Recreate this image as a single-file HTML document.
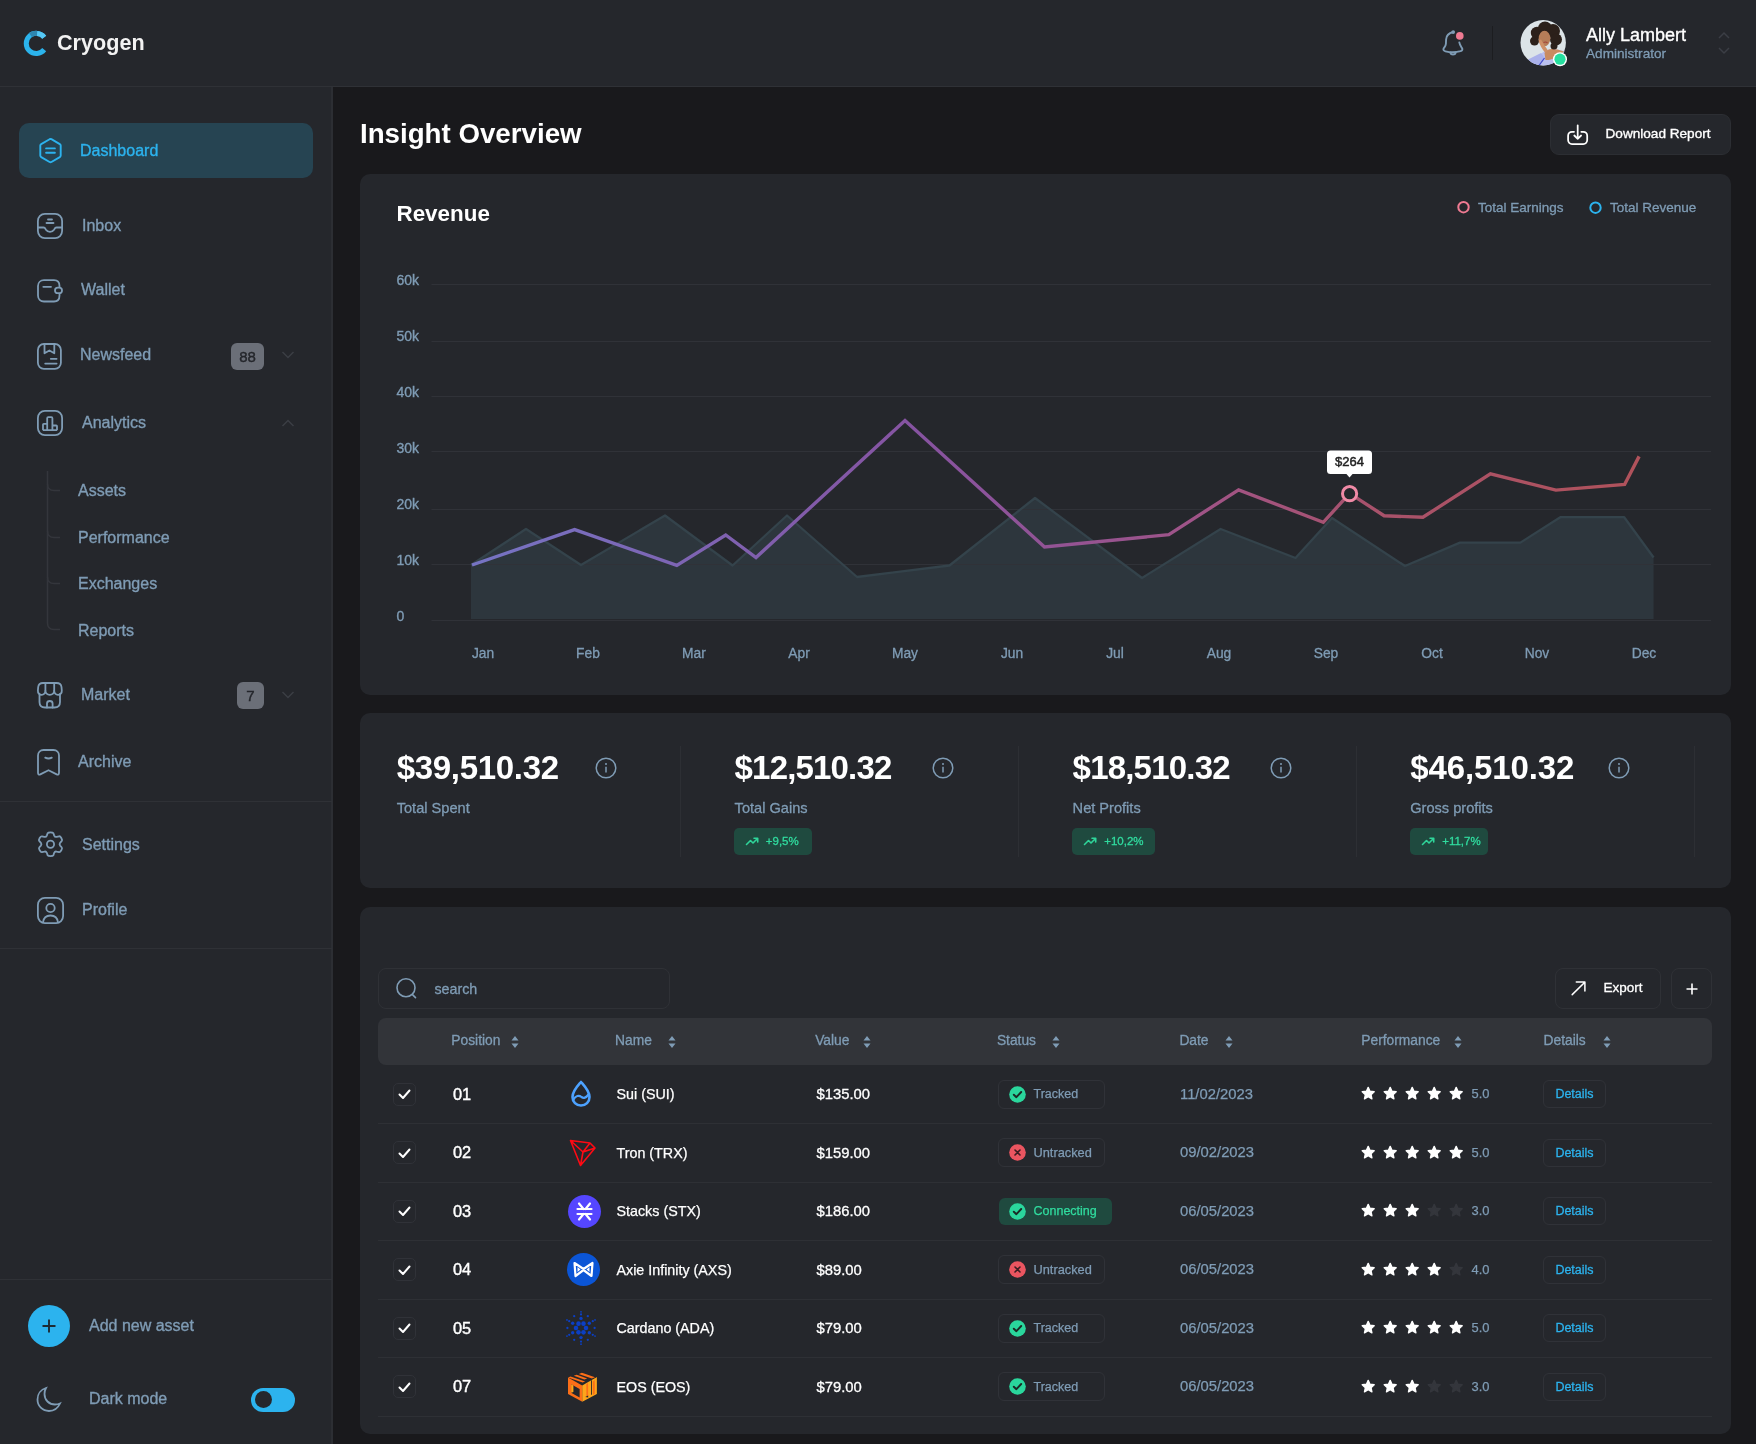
<!DOCTYPE html>
<html><head><meta charset="utf-8">
<style>
*{margin:0;padding:0;box-sizing:border-box}
html,body{width:1756px;height:1444px;overflow:hidden;background:#19191c;font-family:"Liberation Sans",sans-serif;color:#fff}
.abs{position:absolute}
.t{position:absolute;white-space:nowrap;line-height:1}
#hdr{position:absolute;left:0;top:0;width:1756px;height:87px;background:#25272c;border-bottom:1px solid #2f3136}
#side{position:absolute;left:0;top:87px;width:333px;height:1357px;background:#25272c;border-right:2px solid #2c2e33}
.muted{color:#7f9cb5}
.card{position:absolute;background:#25272c;border-radius:10px}
svg{position:absolute;overflow:visible}
#root{position:absolute;left:0;top:0;width:1756px;height:1444px;will-change:transform;overflow:hidden}
</style></head><body><div id="root">
<!-- HEADER -->
<div id="hdr"></div>
<svg style="left:1px;top:0" width="60" height="86">
  <path d="M43.22 37.21 A10.05 10.05 0 1 0 43.22 49.59" fill="none" stroke="#2bb3ec" stroke-width="5"/>
  <path d="M29.54 35.17 A10.05 10.05 0 0 1 36.18 33.39" fill="none" stroke="#2e86b0" stroke-width="5"/>
  <path d="M36.18 33.39 A10.05 10.05 0 0 1 43.22 37.21" fill="none" stroke="#55c7f4" stroke-width="5"/>
</svg>
<div class="t" style="left:57px;top:31.5px;font-size:21.6px;font-weight:700;color:#f2f2f2">Cryogen</div>

<!-- bell -->
<svg style="left:1430px;top:20px" width="45" height="45" fill="none" stroke="#7f9cb5" stroke-width="1.9" stroke-linecap="round">
  <path d="M23.1 12 C19 13 16.3 15.5 16.1 19.5 L15.9 23.8 C15.8 26 14.5 27 13.6 28.5 C13 29.8 13.8 30.8 15.5 31.3 C18 32 20.5 32.3 22.9 32.3 C25.5 32.3 28 32 30.5 31.2 C32.2 30.6 32.8 29.6 32.1 28.3 C31 26.5 29.7 24.8 29.3 22.4"/>
  <path d="M20.2 32.6 C20.7 34 21.6 34.5 23 34.5 C24.4 34.5 25.3 34 25.8 32.6"/>
  <circle cx="23.2" cy="12.1" r="0.9" fill="#7f9cb5"/>
  <circle cx="29.8" cy="15.9" r="3.8" fill="#ef7a92" stroke="none"/>
</svg>
<div class="abs" style="left:1492px;top:26px;width:1px;height:34px;background:#1c1d20"></div>
<!-- avatar -->
<svg style="left:1520px;top:20px" width="50" height="50">
  <defs><clipPath id="av"><circle cx="23.2" cy="22.7" r="22.7"/></clipPath></defs>
  <g clip-path="url(#av)">
    <rect width="50" height="50" fill="#dce4e8"/>
    <path d="M22 33 C26 29 33 28 44 31 L50 32 L50 50 L0 50 Z" fill="#b9bfee"/>
    <path d="M24.5 33 C27 28.5 33 27.5 44 31.5 C37 37.5 31 40.5 25.5 40 Z" fill="#c98b60"/>
    <path d="M5 41 L21 33 L25 38.5 L17.5 47.5 L7 49 Z" fill="#aab1ea"/>
    <path d="M17.5 47.5 L24.5 38" stroke="#3f47c9" stroke-width="1.2"/>
    <circle cx="17" cy="13" r="6.2" fill="#2b201a"/>
    <circle cx="25" cy="8.5" r="7" fill="#2b201a"/>
    <circle cx="33" cy="11" r="7" fill="#2b201a"/>
    <circle cx="36" cy="19.5" r="6" fill="#2b201a"/>
    <circle cx="14.5" cy="21" r="4.5" fill="#2b201a"/>
    <circle cx="34" cy="26" r="3.5" fill="#2b201a"/>
    <ellipse cx="24.5" cy="18.5" rx="5.8" ry="7.8" fill="#b57d58"/>
    <path d="M18.5 20.5 C19.5 24 22 29.5 25 32.5 L28 30.5 C25 26.5 23 22.5 21 19.5 Z" fill="#cf9168"/>
    <path d="M23.5 22.5 C24.5 22 26.5 22 27.5 23" stroke="#a5443a" stroke-width="1.1" fill="none"/>
  </g>
  <circle cx="40" cy="39.2" r="7" fill="#fff"/>
  <circle cx="40" cy="39.2" r="5.6" fill="#26df9f"/>
</svg>
<div class="t" style="left:1586px;top:25.5px;font-size:18px;color:#fff;-webkit-text-stroke:0.35px #fff">Ally Lambert</div>
<div class="t" style="left:1586px;top:47px;font-size:13.6px;color:#7f9cb5;-webkit-text-stroke:0.3px #7f9cb5">Administrator</div>
<svg style="left:1716px;top:30px" width="16" height="26">
  <path d="M3 8 L8 3 L13 8" fill="none" stroke="#3b3e45" stroke-width="1.5"/>
  <path d="M3 18 L8 23 L13 18" fill="none" stroke="#3b3e45" stroke-width="1.5"/>
</svg>

<!-- SIDEBAR -->
<div id="side"></div>

<!-- active -->
<div class="abs" style="left:19px;top:123px;width:294px;height:55px;border-radius:10px;background:#264452"></div>
<svg style="left:35.5px;top:136.5px" width="28" height="28" viewBox="-0.6 -0.6 28 28">
  <path d="M13 1.6 Q13.9 1.1 14.8 1.6 L23.2 6.5 Q24.1 7 24.1 8 L24.1 18 Q24.1 19 23.2 19.5 L14.8 24.4 Q13.9 24.9 13 24.4 L4.6 19.5 Q3.7 19 3.7 18 L3.7 8 Q3.7 7 4.6 6.5 Z" fill="none" stroke="#2cb3ee" stroke-width="1.9"/>
  <path d="M9.5 10.8 H18.3 M9.5 15.2 H18.3" stroke="#2cb3ee" stroke-width="1.9" stroke-linecap="round"/>
</svg>
<div class="t" style="left:80px;top:142.5px;font-size:16px;color:#2cb3ee;-webkit-text-stroke:0.35px #2cb3ee">Dashboard</div>

<!-- inbox -->
<svg style="left:37px;top:213px" width="26" height="26" fill="none" stroke="#7f9cb5" stroke-width="1.8" stroke-linecap="round">
  <rect x="0.9" y="0.9" width="24.2" height="24.2" rx="7"/>
  <path d="M0.9 14.5 H6.5 C8 14.5 8.3 15.5 9 16.8 C9.7 18 11 18.8 13 18.8 C15 18.8 16.3 18 17 16.8 C17.7 15.5 18 14.5 19.5 14.5 H25.1"/>
  <path d="M11 6.5 H15 M9.5 10 H16.5"/>
</svg>
<div class="t muted" style="left:82px;top:217.5px;font-size:16px;-webkit-text-stroke:0.35px #7f9cb5">Inbox</div>

<!-- wallet -->
<svg style="left:37px;top:279px" width="26" height="24" fill="none" stroke="#7f9cb5" stroke-width="1.8" stroke-linecap="round">
  <path d="M22.5 8 V7 C22.5 3.5 20.5 1.2 17 1.2 H7 C3.5 1.2 1 3.5 1 7 V16.5 C1 20 3.5 22.5 7 22.5 H17 C20.5 22.5 22.5 20 22.5 16.5 V15"/>
  <path d="M6.3 7.8 H14"/>
  <rect x="18" y="8.6" width="7" height="5.6" rx="2.8"/>
</svg>
<div class="t muted" style="left:81px;top:281.9px;font-size:16px;-webkit-text-stroke:0.35px #7f9cb5">Wallet</div>

<!-- newsfeed -->
<svg style="left:37px;top:343px" width="26" height="27" fill="none" stroke="#7f9cb5" stroke-width="1.8" stroke-linecap="round" stroke-linejoin="round">
  <rect x="0.9" y="1" width="23" height="24.8" rx="6"/>
  <path d="M7.5 1 V10.3 L12.4 7.4 L17.3 10.3 V1"/>
  <path d="M13.8 15.8 H19.6 M8.2 20.6 H19.6"/>
</svg>
<div class="t muted" style="left:80px;top:347.2px;font-size:16px;-webkit-text-stroke:0.35px #7f9cb5">Newsfeed</div>
<div class="abs" style="left:231px;top:343px;width:33px;height:27px;border-radius:6px;background:#6b6f78"></div>
<div class="t" style="left:231px;top:349px;width:33px;text-align:center;font-size:15px;color:#24262b;-webkit-text-stroke:0.4px #24262b">88</div>
<svg style="left:281px;top:350px" width="14" height="10"><path d="M1.5 2 L7 7.5 L12.5 2" fill="none" stroke="#3b3e45" stroke-width="1.5"/></svg>

<!-- analytics -->
<svg style="left:37px;top:410px" width="26" height="26" fill="none" stroke="#7f9cb5" stroke-width="1.8" stroke-linejoin="round">
  <rect x="0.9" y="0.9" width="24.2" height="24.2" rx="7"/>
  <path d="M6 20.2 H20 M6 20.2 V14.5 Q6 13.8 6.8 13.8 H10.2 V20.2 M10.2 20.2 V8.2 Q10.2 7.2 11.2 7.2 H14.4 Q15.4 7.2 15.4 8.2 V20.2 M15.4 15.5 H19.2 Q20 15.5 20 16.3 V20.2"/>
</svg>
<div class="t muted" style="left:82px;top:414.5px;font-size:16px;-webkit-text-stroke:0.35px #7f9cb5">Analytics</div>
<svg style="left:281px;top:418px" width="14" height="10"><path d="M1.5 8 L7 2.5 L12.5 8" fill="none" stroke="#3b3e45" stroke-width="1.5"/></svg>

<!-- tree -->
<svg style="left:40px;top:468px" width="30" height="170" fill="none" stroke="#34363c" stroke-width="1.5">
  <path d="M7.5 3 V155 Q7.5 161.5 14 161.5 H20"/>
  <path d="M7.5 16 Q7.5 22.5 14 22.5 H20"/>
  <path d="M7.5 63 Q7.5 69.5 14 69.5 H20"/>
  <path d="M7.5 109 Q7.5 115.5 14 115.5 H20"/>
</svg>
<div class="t muted" style="left:78px;top:483px;font-size:16px;-webkit-text-stroke:0.35px #7f9cb5">Assets</div>
<div class="t muted" style="left:78px;top:529.5px;font-size:16px;-webkit-text-stroke:0.35px #7f9cb5">Performance</div>
<div class="t muted" style="left:78px;top:576px;font-size:16px;-webkit-text-stroke:0.35px #7f9cb5">Exchanges</div>
<div class="t muted" style="left:78px;top:622.5px;font-size:16px;-webkit-text-stroke:0.35px #7f9cb5">Reports</div>

<!-- market -->
<svg style="left:37px;top:682px" width="26" height="27" fill="none" stroke="#7f9cb5" stroke-width="1.8" stroke-linejoin="round" stroke-linecap="round">
  <path d="M2.5 12 V20 C2.5 23.5 4.5 25.5 8 25.5 H17.5 C21 25.5 23 23.5 23 20 V12"/>
  <path d="M6 1 H19.5 C22 1 24.2 2.5 24.5 5 L24.8 8.5 C25 11 23.2 12.8 21 12.8 C18.8 12.8 17.2 11 17.2 8.8 C17.2 11 15.4 12.8 12.8 12.8 C10.2 12.8 8.4 11 8.4 8.8 C8.4 11 6.8 12.8 4.6 12.8 C2.4 12.8 0.7 11 0.9 8.5 L1.2 5 C1.5 2.5 3.5 1 6 1 Z"/>
  <path d="M8.4 8.8 V1.2 M17.2 8.8 V1.2"/>
  <path d="M10 25.5 V21.5 C10 20 11 19 12.8 19 C14.6 19 15.6 20 15.6 21.5 V25.5"/>
</svg>
<div class="t muted" style="left:81px;top:686.5px;font-size:16px;-webkit-text-stroke:0.35px #7f9cb5">Market</div>
<div class="abs" style="left:237px;top:682px;width:27px;height:27px;border-radius:6px;background:#6b6f78"></div>
<div class="t" style="left:237px;top:688px;width:27px;text-align:center;font-size:15px;color:#24262b;-webkit-text-stroke:0.4px #24262b">7</div>
<svg style="left:281px;top:690px" width="14" height="10"><path d="M1.5 2 L7 7.5 L12.5 2" fill="none" stroke="#3b3e45" stroke-width="1.5"/></svg>

<!-- archive -->
<svg style="left:37px;top:749px" width="24" height="28" fill="none" stroke="#7f9cb5" stroke-width="1.8" stroke-linejoin="round" stroke-linecap="round">
  <path d="M1 6.5 C1 3.3 3.3 1 6.5 1 H16.5 C19.7 1 22 3.3 22 6.5 V23.8 C22 25.3 21 26 19.7 25.4 L11.5 21.2 L3.3 25.4 C2 26 1 25.3 1 23.8 Z"/>
  <path d="M8.2 8.6 C10.4 9.8 12.6 9.8 14.8 8.6"/>
</svg>
<div class="t muted" style="left:78px;top:753.5px;font-size:16px;-webkit-text-stroke:0.35px #7f9cb5">Archive</div>

<div class="abs" style="left:0;top:801px;width:332px;height:1px;background:#2f3136"></div>
<!-- settings -->
<svg style="left:36px;top:831px" width="29" height="29" fill="none" stroke="#7f9cb5" stroke-width="1.8" stroke-linejoin="round">
  <path d="M11.6 2.2 C12.3 1 16.7 1 17.4 2.2 L18.2 4.6 C18.6 5.5 19.6 6.1 20.6 5.8 L23.1 5.3 C24.5 5 26.7 8.8 25.8 9.9 L24.1 11.8 C23.5 12.6 23.5 13.8 24.1 14.6 L25.8 16.5 C26.7 17.6 24.5 21.4 23.1 21.1 L20.6 20.6 C19.6 20.3 18.6 20.9 18.2 21.8 L17.4 24.2 C16.7 25.4 12.3 25.4 11.6 24.2 L10.8 21.8 C10.4 20.9 9.4 20.3 8.4 20.6 L5.9 21.1 C4.5 21.4 2.3 17.6 3.2 16.5 L4.9 14.6 C5.5 13.8 5.5 12.6 4.9 11.8 L3.2 9.9 C2.3 8.8 4.5 5 5.9 5.3 L8.4 5.8 C9.4 6.1 10.4 5.5 10.8 4.6 Z"/>
  <circle cx="14.5" cy="13.2" r="3.6"/>
</svg>
<div class="t muted" style="left:82px;top:836.5px;font-size:16px;-webkit-text-stroke:0.35px #7f9cb5">Settings</div>
<!-- profile -->
<svg style="left:37px;top:897px" width="27" height="27" fill="none" stroke="#7f9cb5" stroke-width="1.8">
  <rect x="0.9" y="0.9" width="25.2" height="25.2" rx="7"/>
  <circle cx="13.5" cy="11" r="4.2"/>
  <path d="M6 25.5 C6.5 21 9.5 18.5 13.5 18.5 C17.5 18.5 20.5 21 21 25.5"/>
</svg>
<div class="t muted" style="left:82px;top:901.5px;font-size:16px;-webkit-text-stroke:0.35px #7f9cb5">Profile</div>
<div class="abs" style="left:0;top:948px;width:332px;height:1px;background:#2f3136"></div>

<div class="abs" style="left:0;top:1279px;width:332px;height:1px;background:#2f3136"></div>
<svg style="left:28px;top:1305px" width="42" height="42">
  <circle cx="21" cy="21" r="21" fill="#2cb3ee"/>
  <path d="M21 14.5 V27.5 M14.5 21 H27.5" stroke="#1d2b34" stroke-width="1.9"/>
</svg>
<div class="t muted" style="left:89px;top:1317.5px;font-size:16px;-webkit-text-stroke:0.35px #7f9cb5">Add new asset</div>
<svg style="left:36px;top:1386px" width="27" height="27" fill="none" stroke="#7f9cb5" stroke-width="1.8" stroke-linecap="round">
  <path d="M10 2 C5 3.5 1.5 8 1.5 13.5 C1.5 20 6.5 25 13 25 C18 25 22 22 24 17.5 C22.5 18.2 21 18.5 19 18.5 C13 18.5 8.5 14 8.5 8 C8.5 5.8 9 3.8 10 2 Z"/>
</svg>
<div class="t muted" style="left:89px;top:1390.5px;font-size:16px;-webkit-text-stroke:0.35px #7f9cb5">Dark mode</div>
<div class="abs" style="left:251px;top:1387.5px;width:44px;height:24px;border-radius:12px;background:#2cb3ee"></div>
<div class="abs" style="left:255px;top:1391px;width:17px;height:17px;border-radius:50%;background:#25272c"></div>


<!-- MAIN -->

<div class="t" style="left:360px;top:120px;font-size:27.7px;font-weight:700;color:#fff">Insight Overview</div>
<div class="abs" style="left:1550px;top:114px;width:181px;height:41px;border-radius:9px;background:#25272c;border:1px solid #2c2e33"></div>
<svg style="left:1560px;top:118px" width="36" height="32" fill="none" stroke="#fff" stroke-width="1.75" stroke-linecap="round" stroke-linejoin="round">
  <path d="M14 13.8 H12 C9.8 13.8 8.1 15.5 8.1 17.7 V22.1 C8.1 24.3 9.8 26.1 12 26.1 H23.3 C25.5 26.1 27.2 24.3 27.2 22.1 V17.7 C27.2 15.5 25.5 13.8 23.3 13.8 H21.3"/>
  <path d="M17.7 7.3 V20.8 M14.3 17.5 L17.7 20.8 L21.1 17.5"/>
</svg>
<div class="t" style="left:1605.5px;top:127px;font-size:13.6px;color:#fff;-webkit-text-stroke:0.35px #fff">Download Report</div>

<div class="card" style="left:360px;top:174px;width:1371px;height:521px"></div>
<div class="t" style="left:396.5px;top:203px;font-size:22.4px;font-weight:700;color:#fff">Revenue</div>
<svg style="left:1455px;top:199px" width="16" height="16"><circle cx="8.5" cy="8.2" r="5.2" fill="none" stroke="#ef7a92" stroke-width="2"/></svg>
<div class="t muted" style="left:1478px;top:200.5px;font-size:13.5px;-webkit-text-stroke:0.3px #7f9cb5">Total Earnings</div>
<svg style="left:1587px;top:199px" width="16" height="16"><circle cx="8.5" cy="8.7" r="5.2" fill="none" stroke="#2cb3ee" stroke-width="2"/></svg>
<div class="t muted" style="left:1610px;top:200.5px;font-size:13.5px;-webkit-text-stroke:0.3px #7f9cb5">Total Revenue</div>
<div class="t muted" style="left:396.5px;top:273.2px;font-size:14px;-webkit-text-stroke:0.35px #7f9cb5">60k</div>
<div class="t muted" style="left:396.5px;top:329.2px;font-size:14px;-webkit-text-stroke:0.35px #7f9cb5">50k</div>
<div class="t muted" style="left:396.5px;top:385.2px;font-size:14px;-webkit-text-stroke:0.35px #7f9cb5">40k</div>
<div class="t muted" style="left:396.5px;top:441.2px;font-size:14px;-webkit-text-stroke:0.35px #7f9cb5">30k</div>
<div class="t muted" style="left:396.5px;top:497.2px;font-size:14px;-webkit-text-stroke:0.35px #7f9cb5">20k</div>
<div class="t muted" style="left:396.5px;top:553.2px;font-size:14px;-webkit-text-stroke:0.35px #7f9cb5">10k</div>
<div class="t muted" style="left:396.5px;top:609.2px;font-size:14px;-webkit-text-stroke:0.35px #7f9cb5">0</div>

<div class="t muted" style="left:453px;width:60px;text-align:center;top:646.5px;font-size:13.8px;-webkit-text-stroke:0.3px #7f9cb5">Jan</div>
<div class="t muted" style="left:558px;width:60px;text-align:center;top:646.5px;font-size:13.8px;-webkit-text-stroke:0.3px #7f9cb5">Feb</div>
<div class="t muted" style="left:664px;width:60px;text-align:center;top:646.5px;font-size:13.8px;-webkit-text-stroke:0.3px #7f9cb5">Mar</div>
<div class="t muted" style="left:769px;width:60px;text-align:center;top:646.5px;font-size:13.8px;-webkit-text-stroke:0.3px #7f9cb5">Apr</div>
<div class="t muted" style="left:875px;width:60px;text-align:center;top:646.5px;font-size:13.8px;-webkit-text-stroke:0.3px #7f9cb5">May</div>
<div class="t muted" style="left:982px;width:60px;text-align:center;top:646.5px;font-size:13.8px;-webkit-text-stroke:0.3px #7f9cb5">Jun</div>
<div class="t muted" style="left:1085px;width:60px;text-align:center;top:646.5px;font-size:13.8px;-webkit-text-stroke:0.3px #7f9cb5">Jul</div>
<div class="t muted" style="left:1189px;width:60px;text-align:center;top:646.5px;font-size:13.8px;-webkit-text-stroke:0.3px #7f9cb5">Aug</div>
<div class="t muted" style="left:1296px;width:60px;text-align:center;top:646.5px;font-size:13.8px;-webkit-text-stroke:0.3px #7f9cb5">Sep</div>
<div class="t muted" style="left:1402px;width:60px;text-align:center;top:646.5px;font-size:13.8px;-webkit-text-stroke:0.3px #7f9cb5">Oct</div>
<div class="t muted" style="left:1507px;width:60px;text-align:center;top:646.5px;font-size:13.8px;-webkit-text-stroke:0.3px #7f9cb5">Nov</div>
<div class="t muted" style="left:1614px;width:60px;text-align:center;top:646.5px;font-size:13.8px;-webkit-text-stroke:0.3px #7f9cb5">Dec</div>

<svg style="left:0;top:0" width="1756" height="700">
  <defs>
    <linearGradient id="lg" gradientUnits="userSpaceOnUse" x1="472" y1="0" x2="1640" y2="0">
      <stop offset="0" stop-color="#7674c4"/>
      <stop offset="0.38" stop-color="#8653a1"/>
      <stop offset="0.62" stop-color="#a05488"/>
      <stop offset="0.78" stop-color="#a8526a"/>
      <stop offset="1" stop-color="#b0525b"/>
    </linearGradient>
  </defs>
  <path d="M471 619 L471 565 L526 529 L581 565 L665 515.5 L732.6 565.5 L787 515.5 L857 577 L949.5 565.5 L1035 498 L1142 578 L1220.6 529 L1295.5 558 L1332 518 L1405 566 L1460 542.6 L1520.4 542.6 L1560.3 517.2 L1624.2 517.2 L1653.6 557.5 L1653.6 619 Z" fill="#2d363d"/>
  <path d="M431.5 284.5 H1711" stroke="#303238" stroke-width="1"/><path d="M431.5 341.5 H1711" stroke="#303238" stroke-width="1"/><path d="M431.5 396.5 H1711" stroke="#303238" stroke-width="1"/><path d="M431.5 451.5 H1711" stroke="#303238" stroke-width="1"/><path d="M431.5 509.5 H1711" stroke="#303238" stroke-width="1"/><path d="M431.5 564.5 H1711" stroke="#303238" stroke-width="1"/><path d="M431.5 620.5 H1711" stroke="#303238" stroke-width="1"/>
  <path d="M471 565 L526 529 L581 565 L665 515.5 L732.6 565.5 L787 515.5 L857 577 L949.5 565.5 L1035 498 L1142 578 L1220.6 529 L1295.5 558 L1332 518 L1405 566 L1460 542.6 L1520.4 542.6 L1560.3 517.2 L1624.2 517.2 L1653.6 557.5" fill="none" stroke="#34434b" stroke-width="2.3" stroke-linejoin="round"/>
  <path d="M472 565 L574.6 529.6 L676.8 565.4 L725.7 535 L756 557.5 L905 420.5 L1044.5 547 L1168.8 534.6 L1238.6 489.8 L1323.3 522.3 L1349.6 493.4 L1384.1 515.7 L1422.9 517.3 L1490.4 473.8 L1555.9 490.1 L1624.6 484.5 L1639.1 456.4" fill="none" stroke="url(#lg)" stroke-width="3.4" stroke-linejoin="miter"/>
  <circle cx="1349.6" cy="493.7" r="7.1" fill="#25272c" stroke="#f08aa6" stroke-width="3"/>
  <rect x="1327" y="450.5" width="45" height="23.5" rx="3.5" fill="#fff"/>
  <path d="M1346 473.5 L1349.5 477.5 L1353 473.5 Z" fill="#fff"/>
</svg>
<div class="t" style="left:1327px;top:454.6px;width:45px;text-align:center;font-size:13px;color:#222;-webkit-text-stroke:0.45px #222">$264</div>
<div class="card" style="left:360px;top:713px;width:1371px;height:175px"></div>
<div class="t" style="left:396.7px;top:751px;font-size:33px;font-weight:700;color:#fff;letter-spacing:-0.3px">$39,510.32</div>
<svg style="left:594.5px;top:757.2px" width="22" height="22"><circle cx="11" cy="11" r="9.8" fill="none" stroke="#7f9cb5" stroke-width="1.5"/><circle cx="11" cy="7" r="1" fill="#7f9cb5"/><path d="M11 9.8 V15.5" stroke="#7f9cb5" stroke-width="1.5"/></svg>
<div class="t muted" style="left:396.7px;top:801px;font-size:14.6px;-webkit-text-stroke:0.3px #7f9cb5">Total Spent</div>
<div class="t" style="left:734.6px;top:751px;font-size:33px;font-weight:700;color:#fff;letter-spacing:-0.83px">$12,510.32</div>
<svg style="left:932.4000000000001px;top:757.2px" width="22" height="22"><circle cx="11" cy="11" r="9.8" fill="none" stroke="#7f9cb5" stroke-width="1.5"/><circle cx="11" cy="7" r="1" fill="#7f9cb5"/><path d="M11 9.8 V15.5" stroke="#7f9cb5" stroke-width="1.5"/></svg>
<div class="t muted" style="left:734.6px;top:801px;font-size:14.6px;-webkit-text-stroke:0.3px #7f9cb5">Total Gains</div>
<div class="abs" style="left:733.8px;top:827.5px;width:78px;height:27px;border-radius:5px;background:#1f4a3f"></div>
<svg style="left:744.8px;top:834px" width="14" height="14" fill="none" stroke="#2fd59a" stroke-width="1.6" stroke-linecap="round" stroke-linejoin="round"><path d="M1.5 10.5 L5.5 6.5 L8 9 L12.5 4.5 M9 4.3 H12.7 V8"/></svg>
<div class="t" style="left:765.8px;top:835.5px;font-size:11.5px;color:#30dc9f;-webkit-text-stroke:0.3px #30dc9f">+9,5%</div>
<div class="t" style="left:1072.6px;top:751px;font-size:33px;font-weight:700;color:#fff;letter-spacing:-0.8px">$18,510.32</div>
<svg style="left:1270.3999999999999px;top:757.2px" width="22" height="22"><circle cx="11" cy="11" r="9.8" fill="none" stroke="#7f9cb5" stroke-width="1.5"/><circle cx="11" cy="7" r="1" fill="#7f9cb5"/><path d="M11 9.8 V15.5" stroke="#7f9cb5" stroke-width="1.5"/></svg>
<div class="t muted" style="left:1072.6px;top:801px;font-size:14.6px;-webkit-text-stroke:0.3px #7f9cb5">Net Profits</div>
<div class="abs" style="left:1072.2px;top:827.5px;width:83px;height:27px;border-radius:5px;background:#1f4a3f"></div>
<svg style="left:1083.2px;top:834px" width="14" height="14" fill="none" stroke="#2fd59a" stroke-width="1.6" stroke-linecap="round" stroke-linejoin="round"><path d="M1.5 10.5 L5.5 6.5 L8 9 L12.5 4.5 M9 4.3 H12.7 V8"/></svg>
<div class="t" style="left:1104.2px;top:835.5px;font-size:11.5px;color:#30dc9f;-webkit-text-stroke:0.3px #30dc9f">+10,2%</div>
<div class="t" style="left:1410.2px;top:751px;font-size:33px;font-weight:700;color:#fff;letter-spacing:-0.1px">$46,510.32</div>
<svg style="left:1608.0px;top:757.2px" width="22" height="22"><circle cx="11" cy="11" r="9.8" fill="none" stroke="#7f9cb5" stroke-width="1.5"/><circle cx="11" cy="7" r="1" fill="#7f9cb5"/><path d="M11 9.8 V15.5" stroke="#7f9cb5" stroke-width="1.5"/></svg>
<div class="t muted" style="left:1410.2px;top:801px;font-size:14.6px;-webkit-text-stroke:0.3px #7f9cb5">Gross profits</div>
<div class="abs" style="left:1410.2px;top:827.5px;width:77.5px;height:27px;border-radius:5px;background:#1f4a3f"></div>
<svg style="left:1421.2px;top:834px" width="14" height="14" fill="none" stroke="#2fd59a" stroke-width="1.6" stroke-linecap="round" stroke-linejoin="round"><path d="M1.5 10.5 L5.5 6.5 L8 9 L12.5 4.5 M9 4.3 H12.7 V8"/></svg>
<div class="t" style="left:1442.2px;top:835.5px;font-size:11.5px;color:#30dc9f;-webkit-text-stroke:0.3px #30dc9f">+11,7%</div>
<div class="abs" style="left:680px;top:746px;width:1px;height:111px;background:#2d2f34"></div>
<div class="abs" style="left:1018px;top:746px;width:1px;height:111px;background:#2d2f34"></div>
<div class="abs" style="left:1355.5px;top:746px;width:1px;height:111px;background:#2d2f34"></div>
<div class="abs" style="left:1693.5px;top:746px;width:1px;height:111px;background:#2d2f34"></div>
<div class="card" style="left:360px;top:907px;width:1371px;height:527px"></div>
<div class="abs" style="left:378px;top:967.5px;width:292px;height:41px;border-radius:8px;border:1px solid #2f3136"></div>
<svg style="left:394px;top:976px" width="24" height="24" fill="none" stroke="#7f9cb5" stroke-width="1.6" stroke-linecap="round"><circle cx="12" cy="11.8" r="9"/><path d="M18.5 18.6 L21.5 21.6"/></svg>
<div class="t muted" style="left:434.4px;top:981.5px;font-size:14.3px;-webkit-text-stroke:0.3px #7f9cb5">search</div>
<div class="abs" style="left:1554.5px;top:967.5px;width:106.5px;height:41px;border-radius:8px;border:1px solid #2f3136"></div>
<svg style="left:1570px;top:979px" width="18" height="18" fill="none" stroke="#fff" stroke-width="1.5" stroke-linecap="round" stroke-linejoin="round"><path d="M2.2 15.6 L14.8 3.2 M6.3 3.1 H14.9 V12"/></svg>
<div class="t" style="left:1603.5px;top:981px;font-size:13.5px;color:#fff;-webkit-text-stroke:0.3px #fff">Export</div>
<div class="abs" style="left:1671px;top:967.5px;width:41px;height:41px;border-radius:8px;border:1px solid #2f3136"></div>
<svg style="left:1683.6px;top:980.7px" width="16" height="16" stroke="#fff" stroke-width="1.6"><path d="M8 2.5 V13.5 M2.5 8 H13.5"/></svg>
<div class="abs" style="left:378px;top:1018px;width:1334px;height:47px;border-radius:8px;background:#323439"></div>
<div class="t muted" style="left:451.3px;top:1034.3px;font-size:13.8px;-webkit-text-stroke:0.3px #7f9cb5">Position</div>
<svg style="left:510.7px;top:1034.8px" width="8" height="14" fill="#7f9cb5"><path d="M0.5 5.5 L4 1 L7.5 5.5Z M0.5 8.5 L4 13 L7.5 8.5Z"/></svg>
<div class="t muted" style="left:615px;top:1034.3px;font-size:13.8px;-webkit-text-stroke:0.3px #7f9cb5">Name</div>
<svg style="left:668.2px;top:1034.8px" width="8" height="14" fill="#7f9cb5"><path d="M0.5 5.5 L4 1 L7.5 5.5Z M0.5 8.5 L4 13 L7.5 8.5Z"/></svg>
<div class="t muted" style="left:815.2px;top:1034.3px;font-size:13.8px;-webkit-text-stroke:0.3px #7f9cb5">Value</div>
<svg style="left:862.7px;top:1034.8px" width="8" height="14" fill="#7f9cb5"><path d="M0.5 5.5 L4 1 L7.5 5.5Z M0.5 8.5 L4 13 L7.5 8.5Z"/></svg>
<div class="t muted" style="left:996.9px;top:1034.3px;font-size:13.8px;-webkit-text-stroke:0.3px #7f9cb5">Status</div>
<svg style="left:1051.7px;top:1034.8px" width="8" height="14" fill="#7f9cb5"><path d="M0.5 5.5 L4 1 L7.5 5.5Z M0.5 8.5 L4 13 L7.5 8.5Z"/></svg>
<div class="t muted" style="left:1179.4px;top:1034.3px;font-size:13.8px;-webkit-text-stroke:0.3px #7f9cb5">Date</div>
<svg style="left:1225.3px;top:1034.8px" width="8" height="14" fill="#7f9cb5"><path d="M0.5 5.5 L4 1 L7.5 5.5Z M0.5 8.5 L4 13 L7.5 8.5Z"/></svg>
<div class="t muted" style="left:1361.3px;top:1034.3px;font-size:13.8px;-webkit-text-stroke:0.3px #7f9cb5">Performance</div>
<svg style="left:1453.7px;top:1034.8px" width="8" height="14" fill="#7f9cb5"><path d="M0.5 5.5 L4 1 L7.5 5.5Z M0.5 8.5 L4 13 L7.5 8.5Z"/></svg>
<div class="t muted" style="left:1543.6px;top:1034.3px;font-size:13.8px;-webkit-text-stroke:0.3px #7f9cb5">Details</div>
<svg style="left:1602.5px;top:1034.8px" width="8" height="14" fill="#7f9cb5"><path d="M0.5 5.5 L4 1 L7.5 5.5Z M0.5 8.5 L4 13 L7.5 8.5Z"/></svg>
<div class="abs" style="left:393px;top:1082.5px;width:23px;height:23px;border-radius:5px;border:1px solid #303238"></div>
<svg style="left:397px;top:1087.0px" width="15" height="14" fill="none" stroke="#fff" stroke-width="2" stroke-linecap="round" stroke-linejoin="round"><path d="M2.5 7.5 L6 11 L12.5 3.5"/></svg>
<div class="t" style="left:453px;top:1085.7px;font-size:16.4px;color:#fff;-webkit-text-stroke:0.4px #fff">01</div>
<svg style="left:569.2px;top:1080.0px" width="24" height="28"><path d="M12 2 C15 5.5 20.5 11 20.5 17 C20.5 22 16.8 25.5 12 25.5 C7.2 25.5 3.5 22 3.5 17 C3.5 11 9 5.5 12 2 Z" fill="none" stroke="#4da2ff" stroke-width="2.6" stroke-linejoin="round"/><path d="M4.5 19.5 C6.5 15.5 10 15 12.5 17 C14.5 18.5 17 18 19.5 14.5" fill="none" stroke="#4da2ff" stroke-width="2.2" stroke-linecap="round"/></svg>
<div class="t" style="left:616.5px;top:1087.2px;font-size:14.3px;color:#fff;-webkit-text-stroke:0.25px #fff">Sui (SUI)</div>
<div class="t" style="left:816.5px;top:1087.2px;font-size:14.8px;color:#fff;-webkit-text-stroke:0.3px #fff">$135.00</div>
<div class="abs" style="left:997.5px;top:1079.5px;width:107px;height:29px;border-radius:6px;border:1px solid #303238"></div>
<svg style="left:1009px;top:1085.5px" width="17" height="17"><circle cx="8.5" cy="8.5" r="8.3" fill="#2ad69c"/><path d="M4.8 8.7 L7.4 11.2 L12.2 6" fill="none" stroke="#1b2a25" stroke-width="1.9" stroke-linecap="round" stroke-linejoin="round"/></svg>
<div class="t muted" style="left:1033.5px;top:1088.0px;font-size:12.5px;-webkit-text-stroke:0.25px #7f9cb5">Tracked</div>
<div class="t muted" style="left:1180px;top:1086.5px;font-size:14.8px;-webkit-text-stroke:0.25px #7f9cb5">11/02/2023</div>
<svg style="left:1355px;top:1084.0px" width="112" height="20"><polygon points="13.20,3.40 14.93,7.31 19.19,7.75 16.01,10.61 16.90,14.80 13.20,12.65 9.50,14.80 10.39,10.61 7.21,7.75 11.47,7.31" fill="#fff" stroke="#fff" stroke-width="1.4" stroke-linejoin="round"/><polygon points="35.20,3.40 36.93,7.31 41.19,7.75 38.01,10.61 38.90,14.80 35.20,12.65 31.50,14.80 32.39,10.61 29.21,7.75 33.47,7.31" fill="#fff" stroke="#fff" stroke-width="1.4" stroke-linejoin="round"/><polygon points="57.20,3.40 58.93,7.31 63.19,7.75 60.01,10.61 60.90,14.80 57.20,12.65 53.50,14.80 54.39,10.61 51.21,7.75 55.47,7.31" fill="#fff" stroke="#fff" stroke-width="1.4" stroke-linejoin="round"/><polygon points="79.20,3.40 80.93,7.31 85.19,7.75 82.01,10.61 82.90,14.80 79.20,12.65 75.50,14.80 76.39,10.61 73.21,7.75 77.47,7.31" fill="#fff" stroke="#fff" stroke-width="1.4" stroke-linejoin="round"/><polygon points="101.20,3.40 102.93,7.31 107.19,7.75 104.01,10.61 104.90,14.80 101.20,12.65 97.50,14.80 98.39,10.61 95.21,7.75 99.47,7.31" fill="#fff" stroke="#fff" stroke-width="1.4" stroke-linejoin="round"/></svg>
<div class="t muted" style="left:1471.5px;top:1088.4px;font-size:12.9px;-webkit-text-stroke:0.25px #7f9cb5">5.0</div>
<div class="abs" style="left:1543px;top:1080.0px;width:63px;height:28px;border-radius:6px;border:1px solid #303238"></div>
<div class="t" style="left:1543px;width:63px;text-align:center;top:1088.0px;font-size:12.5px;color:#2cb3ee;-webkit-text-stroke:0.3px #2cb3ee">Details</div>
<div class="abs" style="left:378px;top:1123.0px;width:1334px;height:1px;background:#2e3035"></div>
<div class="abs" style="left:393px;top:1141.0px;width:23px;height:23px;border-radius:5px;border:1px solid #303238"></div>
<svg style="left:397px;top:1145.5px" width="15" height="14" fill="none" stroke="#fff" stroke-width="2" stroke-linecap="round" stroke-linejoin="round"><path d="M2.5 7.5 L6 11 L12.5 3.5"/></svg>
<div class="t" style="left:453px;top:1144.2px;font-size:16.4px;color:#fff;-webkit-text-stroke:0.4px #fff">02</div>
<svg style="left:569px;top:1138.5px" width="28" height="28" fill="none" stroke="#ff0a14" stroke-width="1.6" stroke-linejoin="round"><path d="M1.5 1.5 L21 4 L26 9 L11.5 26.5 Z M1.5 1.5 L14 13 L11.5 26.5 M14 13 L26 9 M14 13 L21 4"/></svg>
<div class="t" style="left:616.5px;top:1145.7px;font-size:14.3px;color:#fff;-webkit-text-stroke:0.25px #fff">Tron (TRX)</div>
<div class="t" style="left:816.5px;top:1145.7px;font-size:14.8px;color:#fff;-webkit-text-stroke:0.3px #fff">$159.00</div>
<div class="abs" style="left:997.5px;top:1138.0px;width:107px;height:29px;border-radius:6px;border:1px solid #303238"></div>
<svg style="left:1009px;top:1144.0px" width="17" height="17"><circle cx="8.5" cy="8.5" r="8.3" fill="#ea5560"/><path d="M6 6 L11 11 M11 6 L6 11" stroke="#3a1d22" stroke-width="1.6" stroke-linecap="round"/></svg>
<div class="t muted" style="left:1033.5px;top:1146.5px;font-size:12.8px;-webkit-text-stroke:0.25px #7f9cb5">Untracked</div>
<div class="t muted" style="left:1180px;top:1145.0px;font-size:14.8px;-webkit-text-stroke:0.25px #7f9cb5">09/02/2023</div>
<svg style="left:1355px;top:1142.5px" width="112" height="20"><polygon points="13.20,3.40 14.93,7.31 19.19,7.75 16.01,10.61 16.90,14.80 13.20,12.65 9.50,14.80 10.39,10.61 7.21,7.75 11.47,7.31" fill="#fff" stroke="#fff" stroke-width="1.4" stroke-linejoin="round"/><polygon points="35.20,3.40 36.93,7.31 41.19,7.75 38.01,10.61 38.90,14.80 35.20,12.65 31.50,14.80 32.39,10.61 29.21,7.75 33.47,7.31" fill="#fff" stroke="#fff" stroke-width="1.4" stroke-linejoin="round"/><polygon points="57.20,3.40 58.93,7.31 63.19,7.75 60.01,10.61 60.90,14.80 57.20,12.65 53.50,14.80 54.39,10.61 51.21,7.75 55.47,7.31" fill="#fff" stroke="#fff" stroke-width="1.4" stroke-linejoin="round"/><polygon points="79.20,3.40 80.93,7.31 85.19,7.75 82.01,10.61 82.90,14.80 79.20,12.65 75.50,14.80 76.39,10.61 73.21,7.75 77.47,7.31" fill="#fff" stroke="#fff" stroke-width="1.4" stroke-linejoin="round"/><polygon points="101.20,3.40 102.93,7.31 107.19,7.75 104.01,10.61 104.90,14.80 101.20,12.65 97.50,14.80 98.39,10.61 95.21,7.75 99.47,7.31" fill="#fff" stroke="#fff" stroke-width="1.4" stroke-linejoin="round"/></svg>
<div class="t muted" style="left:1471.5px;top:1146.9px;font-size:12.9px;-webkit-text-stroke:0.25px #7f9cb5">5.0</div>
<div class="abs" style="left:1543px;top:1138.5px;width:63px;height:28px;border-radius:6px;border:1px solid #303238"></div>
<div class="t" style="left:1543px;width:63px;text-align:center;top:1146.5px;font-size:12.5px;color:#2cb3ee;-webkit-text-stroke:0.3px #2cb3ee">Details</div>
<div class="abs" style="left:378px;top:1181.5px;width:1334px;height:1px;background:#2e3035"></div>
<div class="abs" style="left:393px;top:1199.5px;width:23px;height:23px;border-radius:5px;border:1px solid #303238"></div>
<svg style="left:397px;top:1204.0px" width="15" height="14" fill="none" stroke="#fff" stroke-width="2" stroke-linecap="round" stroke-linejoin="round"><path d="M2.5 7.5 L6 11 L12.5 3.5"/></svg>
<div class="t" style="left:453px;top:1202.7px;font-size:16.4px;color:#fff;-webkit-text-stroke:0.4px #fff">03</div>
<svg style="left:568.0px;top:1194.5px" width="33" height="33"><circle cx="16.5" cy="16.5" r="16.5" fill="#5546ff"/><g stroke="#fff" stroke-width="2.2" stroke-linecap="round" fill="none"><path d="M9.5 14 H23.5 M9.5 19 H23.5 M11 8.5 L15.5 14 M22 8.5 L17.5 14 M11 24.5 L15.5 19 M22 24.5 L17.5 19"/></g></svg>
<div class="t" style="left:616.5px;top:1204.2px;font-size:14.3px;color:#fff;-webkit-text-stroke:0.25px #fff">Stacks (STX)</div>
<div class="t" style="left:816.5px;top:1204.2px;font-size:14.8px;color:#fff;-webkit-text-stroke:0.3px #fff">$186.00</div>
<div class="abs" style="left:998.5px;top:1197.5px;width:113px;height:27.5px;border-radius:6px;background:#1f4a3f"></div>
<svg style="left:1009px;top:1202.5px" width="17" height="17"><circle cx="8.5" cy="8.5" r="8.3" fill="#2ad69c"/><path d="M4.8 8.7 L7.4 11.2 L12.2 6" fill="none" stroke="#1b2a25" stroke-width="1.9" stroke-linecap="round" stroke-linejoin="round"/></svg>
<div class="t" style="left:1033.5px;top:1205.0px;font-size:12.5px;color:#30dc9f;-webkit-text-stroke:0.25px #30dc9f">Connecting</div>
<div class="t muted" style="left:1180px;top:1203.5px;font-size:14.8px;-webkit-text-stroke:0.25px #7f9cb5">06/05/2023</div>
<svg style="left:1355px;top:1201.0px" width="112" height="20"><polygon points="13.20,3.40 14.93,7.31 19.19,7.75 16.01,10.61 16.90,14.80 13.20,12.65 9.50,14.80 10.39,10.61 7.21,7.75 11.47,7.31" fill="#fff" stroke="#fff" stroke-width="1.4" stroke-linejoin="round"/><polygon points="35.20,3.40 36.93,7.31 41.19,7.75 38.01,10.61 38.90,14.80 35.20,12.65 31.50,14.80 32.39,10.61 29.21,7.75 33.47,7.31" fill="#fff" stroke="#fff" stroke-width="1.4" stroke-linejoin="round"/><polygon points="57.20,3.40 58.93,7.31 63.19,7.75 60.01,10.61 60.90,14.80 57.20,12.65 53.50,14.80 54.39,10.61 51.21,7.75 55.47,7.31" fill="#fff" stroke="#fff" stroke-width="1.4" stroke-linejoin="round"/><polygon points="79.20,3.40 80.93,7.31 85.19,7.75 82.01,10.61 82.90,14.80 79.20,12.65 75.50,14.80 76.39,10.61 73.21,7.75 77.47,7.31" fill="#34363c" stroke="#34363c" stroke-width="1.4" stroke-linejoin="round"/><polygon points="101.20,3.40 102.93,7.31 107.19,7.75 104.01,10.61 104.90,14.80 101.20,12.65 97.50,14.80 98.39,10.61 95.21,7.75 99.47,7.31" fill="#34363c" stroke="#34363c" stroke-width="1.4" stroke-linejoin="round"/></svg>
<div class="t muted" style="left:1471.5px;top:1205.4px;font-size:12.9px;-webkit-text-stroke:0.25px #7f9cb5">3.0</div>
<div class="abs" style="left:1543px;top:1197.0px;width:63px;height:28px;border-radius:6px;border:1px solid #303238"></div>
<div class="t" style="left:1543px;width:63px;text-align:center;top:1205.0px;font-size:12.5px;color:#2cb3ee;-webkit-text-stroke:0.3px #2cb3ee">Details</div>
<div class="abs" style="left:378px;top:1240.0px;width:1334px;height:1px;background:#2e3035"></div>
<div class="abs" style="left:393px;top:1258.0px;width:23px;height:23px;border-radius:5px;border:1px solid #303238"></div>
<svg style="left:397px;top:1262.5px" width="15" height="14" fill="none" stroke="#fff" stroke-width="2" stroke-linecap="round" stroke-linejoin="round"><path d="M2.5 7.5 L6 11 L12.5 3.5"/></svg>
<div class="t" style="left:453px;top:1261.2px;font-size:16.4px;color:#fff;-webkit-text-stroke:0.4px #fff">04</div>
<svg style="left:567.0px;top:1253.0px" width="33" height="33"><circle cx="16.5" cy="16.5" r="16.5" fill="#0b55d6"/><path d="M7.5 10 L16.5 16 L25.5 10 L24.5 23 L16.5 17 L8.5 23 Z" fill="none" stroke="#fff" stroke-width="2.2" stroke-linejoin="round"/><path d="M10.5 14 L13.5 16.5 L10.5 19 Z M22.5 14 L19.5 16.5 L22.5 19Z" fill="#fff"/></svg>
<div class="t" style="left:616.5px;top:1262.7px;font-size:14.3px;color:#fff;-webkit-text-stroke:0.25px #fff">Axie Infinity (AXS)</div>
<div class="t" style="left:816.5px;top:1262.7px;font-size:14.8px;color:#fff;-webkit-text-stroke:0.3px #fff">$89.00</div>
<div class="abs" style="left:997.5px;top:1255.0px;width:107px;height:29px;border-radius:6px;border:1px solid #303238"></div>
<svg style="left:1009px;top:1261.0px" width="17" height="17"><circle cx="8.5" cy="8.5" r="8.3" fill="#ea5560"/><path d="M6 6 L11 11 M11 6 L6 11" stroke="#3a1d22" stroke-width="1.6" stroke-linecap="round"/></svg>
<div class="t muted" style="left:1033.5px;top:1263.5px;font-size:12.8px;-webkit-text-stroke:0.25px #7f9cb5">Untracked</div>
<div class="t muted" style="left:1180px;top:1262.0px;font-size:14.8px;-webkit-text-stroke:0.25px #7f9cb5">06/05/2023</div>
<svg style="left:1355px;top:1259.5px" width="112" height="20"><polygon points="13.20,3.40 14.93,7.31 19.19,7.75 16.01,10.61 16.90,14.80 13.20,12.65 9.50,14.80 10.39,10.61 7.21,7.75 11.47,7.31" fill="#fff" stroke="#fff" stroke-width="1.4" stroke-linejoin="round"/><polygon points="35.20,3.40 36.93,7.31 41.19,7.75 38.01,10.61 38.90,14.80 35.20,12.65 31.50,14.80 32.39,10.61 29.21,7.75 33.47,7.31" fill="#fff" stroke="#fff" stroke-width="1.4" stroke-linejoin="round"/><polygon points="57.20,3.40 58.93,7.31 63.19,7.75 60.01,10.61 60.90,14.80 57.20,12.65 53.50,14.80 54.39,10.61 51.21,7.75 55.47,7.31" fill="#fff" stroke="#fff" stroke-width="1.4" stroke-linejoin="round"/><polygon points="79.20,3.40 80.93,7.31 85.19,7.75 82.01,10.61 82.90,14.80 79.20,12.65 75.50,14.80 76.39,10.61 73.21,7.75 77.47,7.31" fill="#fff" stroke="#fff" stroke-width="1.4" stroke-linejoin="round"/><polygon points="101.20,3.40 102.93,7.31 107.19,7.75 104.01,10.61 104.90,14.80 101.20,12.65 97.50,14.80 98.39,10.61 95.21,7.75 99.47,7.31" fill="#34363c" stroke="#34363c" stroke-width="1.4" stroke-linejoin="round"/></svg>
<div class="t muted" style="left:1471.5px;top:1263.9px;font-size:12.9px;-webkit-text-stroke:0.25px #7f9cb5">4.0</div>
<div class="abs" style="left:1543px;top:1255.5px;width:63px;height:28px;border-radius:6px;border:1px solid #303238"></div>
<div class="t" style="left:1543px;width:63px;text-align:center;top:1263.5px;font-size:12.5px;color:#2cb3ee;-webkit-text-stroke:0.3px #2cb3ee">Details</div>
<div class="abs" style="left:378px;top:1298.5px;width:1334px;height:1px;background:#2e3035"></div>
<div class="abs" style="left:393px;top:1316.5px;width:23px;height:23px;border-radius:5px;border:1px solid #303238"></div>
<svg style="left:397px;top:1321.0px" width="15" height="14" fill="none" stroke="#fff" stroke-width="2" stroke-linecap="round" stroke-linejoin="round"><path d="M2.5 7.5 L6 11 L12.5 3.5"/></svg>
<div class="t" style="left:453px;top:1319.7px;font-size:16.4px;color:#fff;-webkit-text-stroke:0.4px #fff">05</div>
<svg style="left:564px;top:1311.0px" width="34" height="34"><circle cx="22.00" cy="17.00" r="2.3" fill="#0b3fc4"/><circle cx="19.50" cy="21.33" r="2.3" fill="#0b3fc4"/><circle cx="14.50" cy="21.33" r="2.3" fill="#0b3fc4"/><circle cx="12.00" cy="17.00" r="2.3" fill="#0b3fc4"/><circle cx="14.50" cy="12.67" r="2.3" fill="#0b3fc4"/><circle cx="19.50" cy="12.67" r="2.3" fill="#0b3fc4"/><circle cx="25.31" cy="21.80" r="1.7" fill="#0b3fc4"/><circle cx="17.00" cy="26.60" r="1.7" fill="#0b3fc4"/><circle cx="8.69" cy="21.80" r="1.7" fill="#0b3fc4"/><circle cx="8.69" cy="12.20" r="1.7" fill="#0b3fc4"/><circle cx="17.00" cy="7.40" r="1.7" fill="#0b3fc4"/><circle cx="25.31" cy="12.20" r="1.7" fill="#0b3fc4"/><circle cx="30.60" cy="17.00" r="1.15" fill="#0b3fc4"/><circle cx="28.78" cy="23.80" r="1.15" fill="#0b3fc4"/><circle cx="23.80" cy="28.78" r="1.15" fill="#0b3fc4"/><circle cx="17.00" cy="30.60" r="1.15" fill="#0b3fc4"/><circle cx="10.20" cy="28.78" r="1.15" fill="#0b3fc4"/><circle cx="5.22" cy="23.80" r="1.15" fill="#0b3fc4"/><circle cx="3.40" cy="17.00" r="1.15" fill="#0b3fc4"/><circle cx="5.22" cy="10.20" r="1.15" fill="#0b3fc4"/><circle cx="10.20" cy="5.22" r="1.15" fill="#0b3fc4"/><circle cx="17.00" cy="3.40" r="1.15" fill="#0b3fc4"/><circle cx="23.80" cy="5.22" r="1.15" fill="#0b3fc4"/><circle cx="28.78" cy="10.20" r="1.15" fill="#0b3fc4"/><circle cx="31.03" cy="25.10" r="0.9" fill="#0b3fc4"/><circle cx="17.00" cy="33.20" r="0.9" fill="#0b3fc4"/><circle cx="2.97" cy="25.10" r="0.9" fill="#0b3fc4"/><circle cx="2.97" cy="8.90" r="0.9" fill="#0b3fc4"/><circle cx="17.00" cy="0.80" r="0.9" fill="#0b3fc4"/><circle cx="31.03" cy="8.90" r="0.9" fill="#0b3fc4"/></svg>
<div class="t" style="left:616.5px;top:1321.2px;font-size:14.3px;color:#fff;-webkit-text-stroke:0.25px #fff">Cardano (ADA)</div>
<div class="t" style="left:816.5px;top:1321.2px;font-size:14.8px;color:#fff;-webkit-text-stroke:0.3px #fff">$79.00</div>
<div class="abs" style="left:997.5px;top:1313.5px;width:107px;height:29px;border-radius:6px;border:1px solid #303238"></div>
<svg style="left:1009px;top:1319.5px" width="17" height="17"><circle cx="8.5" cy="8.5" r="8.3" fill="#2ad69c"/><path d="M4.8 8.7 L7.4 11.2 L12.2 6" fill="none" stroke="#1b2a25" stroke-width="1.9" stroke-linecap="round" stroke-linejoin="round"/></svg>
<div class="t muted" style="left:1033.5px;top:1322.0px;font-size:12.5px;-webkit-text-stroke:0.25px #7f9cb5">Tracked</div>
<div class="t muted" style="left:1180px;top:1320.5px;font-size:14.8px;-webkit-text-stroke:0.25px #7f9cb5">06/05/2023</div>
<svg style="left:1355px;top:1318.0px" width="112" height="20"><polygon points="13.20,3.40 14.93,7.31 19.19,7.75 16.01,10.61 16.90,14.80 13.20,12.65 9.50,14.80 10.39,10.61 7.21,7.75 11.47,7.31" fill="#fff" stroke="#fff" stroke-width="1.4" stroke-linejoin="round"/><polygon points="35.20,3.40 36.93,7.31 41.19,7.75 38.01,10.61 38.90,14.80 35.20,12.65 31.50,14.80 32.39,10.61 29.21,7.75 33.47,7.31" fill="#fff" stroke="#fff" stroke-width="1.4" stroke-linejoin="round"/><polygon points="57.20,3.40 58.93,7.31 63.19,7.75 60.01,10.61 60.90,14.80 57.20,12.65 53.50,14.80 54.39,10.61 51.21,7.75 55.47,7.31" fill="#fff" stroke="#fff" stroke-width="1.4" stroke-linejoin="round"/><polygon points="79.20,3.40 80.93,7.31 85.19,7.75 82.01,10.61 82.90,14.80 79.20,12.65 75.50,14.80 76.39,10.61 73.21,7.75 77.47,7.31" fill="#fff" stroke="#fff" stroke-width="1.4" stroke-linejoin="round"/><polygon points="101.20,3.40 102.93,7.31 107.19,7.75 104.01,10.61 104.90,14.80 101.20,12.65 97.50,14.80 98.39,10.61 95.21,7.75 99.47,7.31" fill="#fff" stroke="#fff" stroke-width="1.4" stroke-linejoin="round"/></svg>
<div class="t muted" style="left:1471.5px;top:1322.4px;font-size:12.9px;-webkit-text-stroke:0.25px #7f9cb5">5.0</div>
<div class="abs" style="left:1543px;top:1314.0px;width:63px;height:28px;border-radius:6px;border:1px solid #303238"></div>
<div class="t" style="left:1543px;width:63px;text-align:center;top:1322.0px;font-size:12.5px;color:#2cb3ee;-webkit-text-stroke:0.3px #2cb3ee">Details</div>
<div class="abs" style="left:378px;top:1357.0px;width:1334px;height:1px;background:#2e3035"></div>
<div class="abs" style="left:393px;top:1375.0px;width:23px;height:23px;border-radius:5px;border:1px solid #303238"></div>
<svg style="left:397px;top:1379.5px" width="15" height="14" fill="none" stroke="#fff" stroke-width="2" stroke-linecap="round" stroke-linejoin="round"><path d="M2.5 7.5 L6 11 L12.5 3.5"/></svg>
<div class="t" style="left:453px;top:1378.2px;font-size:16.4px;color:#fff;-webkit-text-stroke:0.4px #fff">07</div>
<svg style="left:560.00px;top:1365.50px" width="45" height="40"><polygon points="8.00,11.40 22.20,19.40 22.30,35.70 8.00,28.00" fill="#fb6e18"/><polygon points="11.12,18.14 19.64,22.94 19.64,31.57 11.12,26.77" fill="#25272c"/><polygon points="11.12,18.14 13.40,19.42 13.40,26.06 11.12,26.77" fill="#fda51b"/><polygon points="22.20,19.40 36.90,11.10 36.90,28.00 22.30,35.70" fill="#fda51b"/><polygon points="31.02,14.42 31.90,13.92 31.99,28.59 31.11,29.09" fill="#25272c"/><polygon points="26.32,17.89 28.08,16.89 28.16,29.94 26.40,30.93" fill="#fb6e18"/><polygon points="32.80,15.87 34.70,13.97 34.79,27.83 32.88,28.91" fill="#fb6e18"/><polygon points="25.22,31.11 28.16,29.45 28.18,31.57" fill="#25272c"/><polygon points="22.30,6.10 36.90,11.10 22.60,16.40 8.00,11.40" fill="#25272c" opacity="0.6"/><polygon points="21.89,6.77 35.03,11.27 31.88,12.44 18.74,7.94" fill="#fb6e18"/><polygon points="16.59,8.73 27.25,12.38 24.39,13.45 13.74,9.79" fill="#fb6e18"/><polygon points="10.57,10.45 25.17,15.45 22.60,16.40 8.00,11.40" fill="#fb6e18"/></svg>
<div class="t" style="left:616.5px;top:1379.7px;font-size:14.3px;color:#fff;-webkit-text-stroke:0.25px #fff">EOS (EOS)</div>
<div class="t" style="left:816.5px;top:1379.7px;font-size:14.8px;color:#fff;-webkit-text-stroke:0.3px #fff">$79.00</div>
<div class="abs" style="left:997.5px;top:1372.0px;width:107px;height:29px;border-radius:6px;border:1px solid #303238"></div>
<svg style="left:1009px;top:1378.0px" width="17" height="17"><circle cx="8.5" cy="8.5" r="8.3" fill="#2ad69c"/><path d="M4.8 8.7 L7.4 11.2 L12.2 6" fill="none" stroke="#1b2a25" stroke-width="1.9" stroke-linecap="round" stroke-linejoin="round"/></svg>
<div class="t muted" style="left:1033.5px;top:1380.5px;font-size:12.5px;-webkit-text-stroke:0.25px #7f9cb5">Tracked</div>
<div class="t muted" style="left:1180px;top:1379.0px;font-size:14.8px;-webkit-text-stroke:0.25px #7f9cb5">06/05/2023</div>
<svg style="left:1355px;top:1376.5px" width="112" height="20"><polygon points="13.20,3.40 14.93,7.31 19.19,7.75 16.01,10.61 16.90,14.80 13.20,12.65 9.50,14.80 10.39,10.61 7.21,7.75 11.47,7.31" fill="#fff" stroke="#fff" stroke-width="1.4" stroke-linejoin="round"/><polygon points="35.20,3.40 36.93,7.31 41.19,7.75 38.01,10.61 38.90,14.80 35.20,12.65 31.50,14.80 32.39,10.61 29.21,7.75 33.47,7.31" fill="#fff" stroke="#fff" stroke-width="1.4" stroke-linejoin="round"/><polygon points="57.20,3.40 58.93,7.31 63.19,7.75 60.01,10.61 60.90,14.80 57.20,12.65 53.50,14.80 54.39,10.61 51.21,7.75 55.47,7.31" fill="#fff" stroke="#fff" stroke-width="1.4" stroke-linejoin="round"/><polygon points="79.20,3.40 80.93,7.31 85.19,7.75 82.01,10.61 82.90,14.80 79.20,12.65 75.50,14.80 76.39,10.61 73.21,7.75 77.47,7.31" fill="#34363c" stroke="#34363c" stroke-width="1.4" stroke-linejoin="round"/><polygon points="101.20,3.40 102.93,7.31 107.19,7.75 104.01,10.61 104.90,14.80 101.20,12.65 97.50,14.80 98.39,10.61 95.21,7.75 99.47,7.31" fill="#34363c" stroke="#34363c" stroke-width="1.4" stroke-linejoin="round"/></svg>
<div class="t muted" style="left:1471.5px;top:1380.9px;font-size:12.9px;-webkit-text-stroke:0.25px #7f9cb5">3.0</div>
<div class="abs" style="left:1543px;top:1372.5px;width:63px;height:28px;border-radius:6px;border:1px solid #303238"></div>
<div class="t" style="left:1543px;width:63px;text-align:center;top:1380.5px;font-size:12.5px;color:#2cb3ee;-webkit-text-stroke:0.3px #2cb3ee">Details</div>
<div class="abs" style="left:378px;top:1415.5px;width:1334px;height:1px;background:#2e3035"></div>
</div></body></html>
